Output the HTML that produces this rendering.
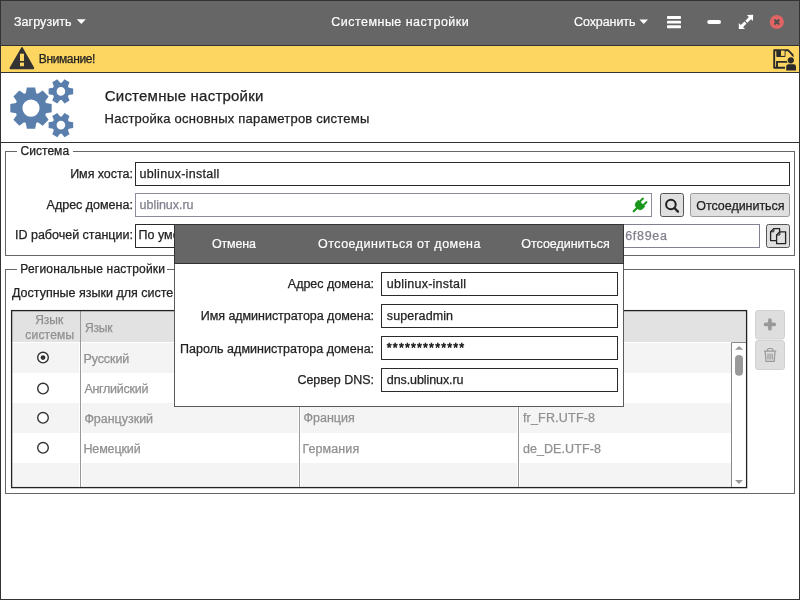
<!DOCTYPE html>
<html><head><meta charset="utf-8">
<style>
*{margin:0;padding:0}
html,body{width:800px;height:600px;overflow:hidden;background:#fff}
svg{display:block;position:absolute;left:0;top:0;will-change:transform}
text{white-space:pre}
</style></head><body>
<svg width="800" height="600" viewBox="0 0 800 600">
<rect x="0" y="0" width="800" height="600" fill="#fff"/>
<rect x="1" y="1" width="798" height="44" fill="#666"/>
<rect x="1" y="45" width="798" height="1" fill="#333"/>
<rect x="1" y="46" width="798" height="26" fill="#fdd662"/>
<rect x="1" y="72" width="798" height="1" fill="#333"/>
<rect x="1" y="142" width="798" height="1" fill="#333"/>
<g font-family="Liberation Sans">
<text x="14.00" y="25.50" font-size="12.5" fill="#ffffff" letter-spacing="0.055" stroke="#ffffff" stroke-width="0.2">Загрузить</text>
<text x="331.25" y="26.25" font-size="12.5" fill="#ffffff" letter-spacing="0.478" stroke="#ffffff" stroke-width="0.2">Системные настройки</text>
<text x="574.00" y="25.60" font-size="12.5" fill="#ffffff" letter-spacing="-0.075" stroke="#ffffff" stroke-width="0.2">Сохранить</text>
</g>
<path d="M76.8 19.2 L85.8 19.2 L81.3 24 Z" fill="#fff"/>
<path d="M639.4 19.4 L648 19.4 L643.7 24 Z" fill="#fff"/>
<rect x="667" y="16.1" width="14" height="2.9" rx="0.7" fill="#fff"/>
<rect x="667" y="20.7" width="14" height="2.9" rx="0.7" fill="#fff"/>
<rect x="667" y="25.3" width="14" height="2.9" rx="0.7" fill="#fff"/>
<rect x="707.2" y="19.9" width="13.8" height="4.1" rx="2" fill="#fff"/>
<path d="M753.2 14.8 L746.9 15.0 L752.9 21.0 Z" fill="#fff"/>
<path d="M738.8 29.1 L745.0 29.1 L738.8 22.9 Z" fill="#fff"/>
<path d="M750.5 17.6 L746.4 21.7 M741.6 26.4 L745.5 22.5" stroke="#fff" stroke-width="3"/>
<circle cx="776.8" cy="22" r="7.1" fill="#e06464"/>
<path d="M775 20.2 L778.6 23.8 M778.6 20.2 L775 23.8" stroke="#505050" stroke-width="2.1" stroke-linecap="round"/>
<path d="M22 47.6 L33.4 67.6 Q34 68.6 32.8 68.6 L11 68.6 Q9.8 68.6 10.4 67.6 Z" fill="#333" stroke="#333" stroke-width="1.2" stroke-linejoin="round"/>
<rect x="20" y="53.7" width="4" height="7.3" fill="#fdd662"/>
<rect x="20" y="62.6" width="4" height="3.6" fill="#fdd662"/>
<path d="M774.2 50.2 H788 L792.6 54.8 V67.8 H774.2 Z" fill="none" stroke="#2a2a2a" stroke-width="1.9" stroke-linejoin="round"/>
<rect x="776.3" y="50" width="9.2" height="7" rx="0.8" fill="#2a2a2a"/>
<rect x="781" y="50.6" width="3.6" height="5.3" fill="#fdd662"/>
<path d="M777 67.8 V61.9 H788" fill="none" stroke="#2a2a2a" stroke-width="1.9"/>
<circle cx="790.8" cy="60.3" r="4.2" fill="#fdd662"/>
<rect x="785" y="63" width="12" height="8.5" rx="2.5" fill="#fdd662"/>
<circle cx="790.8" cy="60.3" r="3.1" fill="#2a2a2a"/>
<path d="M786.2 70.6 V66.6 Q786.2 64.2 788.6 64.2 H793.6 Q796 64.2 796 66.6 V70.6 Z" fill="#2a2a2a"/>
<g fill="#5a7fad" fill-rule="evenodd" transform="translate(0,73)">
<path d="M25.80 20.18 L26.83 14.42 L35.17 14.42 L36.20 20.18 L36.63 20.34 L37.05 20.50 L37.46 20.68 L37.87 20.87 L42.68 17.52 L48.58 23.42 L45.23 28.23 L45.42 28.64 L45.60 29.05 L45.76 29.47 L45.92 29.90 L51.68 30.93 L51.68 39.27 L45.92 40.30 L45.76 40.73 L45.60 41.15 L45.42 41.56 L45.23 41.97 L48.58 46.78 L42.68 52.68 L37.87 49.33 L37.46 49.52 L37.05 49.70 L36.63 49.86 L36.20 50.02 L35.17 55.78 L26.83 55.78 L25.80 50.02 L25.37 49.86 L24.95 49.70 L24.54 49.52 L24.13 49.33 L19.32 52.68 L13.42 46.78 L16.77 41.97 L16.58 41.56 L16.40 41.15 L16.24 40.73 L16.08 40.30 L10.32 39.27 L10.32 30.93 L16.08 29.90 L16.24 29.47 L16.40 29.05 L16.58 28.64 L16.77 28.23 L13.42 23.42 L19.32 17.52 L24.13 20.87 L24.54 20.68 L24.95 20.50 L25.37 20.34 Z M39.60 35.10 A8.6 8.6 0 1 0 22.40 35.10 A8.6 8.6 0 1 0 39.60 35.10 Z"/>
<path d="M68.83 14.81 L73.17 15.53 L73.17 21.27 L68.83 21.99 L68.64 22.37 L68.43 22.75 L68.21 23.11 L67.97 23.47 L69.52 27.59 L64.54 30.46 L61.75 27.06 L61.33 27.09 L60.90 27.10 L60.47 27.09 L60.05 27.06 L57.26 30.46 L52.28 27.59 L53.83 23.47 L53.59 23.11 L53.37 22.75 L53.16 22.37 L52.97 21.99 L48.63 21.27 L48.63 15.53 L52.97 14.81 L53.16 14.43 L53.37 14.05 L53.59 13.69 L53.83 13.33 L52.28 9.21 L57.26 6.34 L60.05 9.74 L60.47 9.71 L60.90 9.70 L61.33 9.71 L61.75 9.74 L64.54 6.34 L69.52 9.21 L67.97 13.33 L68.21 13.69 L68.43 14.05 L68.64 14.43 Z M65.20 18.40 A4.3 4.3 0 1 0 56.60 18.40 A4.3 4.3 0 1 0 65.20 18.40 Z"/>
<path d="M68.83 48.51 L73.17 49.23 L73.17 54.97 L68.83 55.69 L68.64 56.07 L68.43 56.45 L68.21 56.81 L67.97 57.17 L69.52 61.29 L64.54 64.16 L61.75 60.76 L61.33 60.79 L60.90 60.80 L60.47 60.79 L60.05 60.76 L57.26 64.16 L52.28 61.29 L53.83 57.17 L53.59 56.81 L53.37 56.45 L53.16 56.07 L52.97 55.69 L48.63 54.97 L48.63 49.23 L52.97 48.51 L53.16 48.13 L53.37 47.75 L53.59 47.39 L53.83 47.03 L52.28 42.91 L57.26 40.04 L60.05 43.44 L60.47 43.41 L60.90 43.40 L61.33 43.41 L61.75 43.44 L64.54 40.04 L69.52 42.91 L67.97 47.03 L68.21 47.39 L68.43 47.75 L68.64 48.13 Z M65.20 52.10 A4.3 4.3 0 1 0 56.60 52.10 A4.3 4.3 0 1 0 65.20 52.10 Z"/>
</g>
<rect x="5.5" y="151.5" width="789" height="104" fill="none" stroke="#666"/>
<rect x="17" y="148" width="56" height="7" fill="#fff"/>
<rect x="5.5" y="269.5" width="789" height="224" fill="none" stroke="#666"/>
<rect x="17" y="266" width="150" height="7" fill="#fff"/>
<rect x="135.5" y="162.5" width="654" height="23" fill="#fff" stroke="#2a2a2a"/>
<rect x="135.5" y="193.5" width="516" height="23" fill="#fff" stroke="#8c8c9c"/>
<rect x="660.5" y="193.5" width="23" height="23" rx="2" fill="#e0e0e0" stroke="#555"/>
<rect x="690.5" y="193.5" width="99" height="23" rx="2" fill="#e0e0e0" stroke="#999"/>
<rect x="135.5" y="224.5" width="624" height="23" fill="#fff" stroke="#80808e"/>
<path d="M300 224.5 H135.5 V247.5 H300" fill="none" stroke="#2a2a2a"/>
<rect x="766.5" y="224.5" width="23" height="23" rx="2" fill="#e0e0e0" stroke="#555"/>
<circle cx="670.9" cy="204.5" r="4.8" fill="none" stroke="#222" stroke-width="2"/>
<path d="M674.4 208 L678 211.6" stroke="#222" stroke-width="2.2" stroke-linecap="round"/>
<g transform="translate(639.8,205.2) rotate(-45)" fill="#1a961a" stroke="#1a961a">
<path d="M-3 0 H-8.6" stroke-width="2.1" stroke-linecap="round"/>
<path d="M2.6 -4.6 V4.6 H-0.5 Q-4.2 4.6 -4.2 0 Q-4.2 -4.6 -0.5 -4.6 Z" stroke-width="0.6"/>
<path d="M2.5 -2.5 H6.9 M2.5 2.5 H6.9" stroke-width="2" stroke-linecap="round"/>
</g>
<g fill="#e0e0e0" stroke="#222" stroke-width="1.3" stroke-linejoin="round">
<path d="M770.6 231.8 L773.8 228.6 H779.6 V240.6 H770.6 Z"/>
<path d="M770.6 231.8 H773.8 V228.6" fill="none" stroke-width="1"/>
<path d="M776.6 235 L779.8 231.8 H785.6 V243.6 H776.6 Z"/>
<path d="M776.6 235 H779.8 V231.8" fill="none" stroke-width="1"/>
</g>
<rect x="11" y="310" width="736" height="178" fill="#fff"/>
<rect x="12" y="311" width="734" height="31" fill="#e2e2e2"/>
<rect x="12" y="343" width="67" height="30" fill="#f4f4f4"/>
<rect x="82" y="343" width="216" height="30" fill="#f4f4f4"/>
<rect x="301" y="343" width="216" height="30" fill="#f4f4f4"/>
<rect x="520" y="343" width="211" height="30" fill="#f4f4f4"/>
<rect x="12" y="403" width="67" height="30" fill="#f4f4f4"/>
<rect x="82" y="403" width="216" height="30" fill="#f4f4f4"/>
<rect x="301" y="403" width="216" height="30" fill="#f4f4f4"/>
<rect x="520" y="403" width="211" height="30" fill="#f4f4f4"/>
<rect x="12" y="463" width="67" height="24" fill="#f4f4f4"/>
<rect x="82" y="463" width="216" height="24" fill="#f4f4f4"/>
<rect x="301" y="463" width="216" height="24" fill="#f4f4f4"/>
<rect x="520" y="463" width="211" height="24" fill="#f4f4f4"/>
<rect x="80" y="311" width="1" height="176" fill="#999"/>
<rect x="299" y="311" width="1" height="176" fill="#999"/>
<rect x="518" y="311" width="1" height="176" fill="#999"/>
<rect x="731" y="342" width="15" height="145" fill="#fff"/>
<path d="M731.5 487 V342.5 H746" fill="none" stroke="#888"/>
<path d="M735 349.8 L739 346 L743.2 349.8 Z" fill="#999"/>
<rect x="735" y="355" width="8" height="20.8" rx="4" fill="#999"/>
<path d="M735 480 L743 480 L739 484 Z" fill="#999"/>
<rect x="11.6" y="310.6" width="735" height="177" fill="none" stroke="#222" stroke-width="1.3"/>
<circle cx="43" cy="357.6" r="5.3" fill="#fff" stroke="#333" stroke-width="1.4"/>
<circle cx="43" cy="357.6" r="2.4" fill="#333"/>
<circle cx="43" cy="388.6" r="5.3" fill="#fff" stroke="#333" stroke-width="1.4"/>
<circle cx="43" cy="417.8" r="5.3" fill="#fff" stroke="#333" stroke-width="1.4"/>
<circle cx="43" cy="447.8" r="5.3" fill="#fff" stroke="#333" stroke-width="1.4"/>
<rect x="755.5" y="310.5" width="29" height="28.5" rx="2.5" fill="#dedede" stroke="#d2d2d2"/>
<rect x="755.5" y="340.5" width="29" height="29" rx="2.5" fill="#dedede" stroke="#d2d2d2"/>
<path d="M765.6 324.4 H774.2 M769.9 320.1 V328.7" stroke="#999" stroke-width="3.7" stroke-linecap="round"/>
<g fill="none" stroke="#999" stroke-width="1.2">
<path d="M764 351.2 H776.2 M767.6 351 V349.6 Q767.6 348.5 768.8 348.5 H771.6 Q772.8 348.5 772.8 349.6 V351"/>
<path d="M765.2 351.5 L766 361.4 H774.2 L775 351.5"/>
<path d="M768 353.5 V359.5 M770.1 353.5 V359.5 M772.2 353.5 V359.5"/>
</g>
<g font-family="Liberation Sans">
<text x="38.75" y="62.50" font-size="12" fill="#222222" letter-spacing="-0.376" stroke="#222222" stroke-width="0.25">Внимание!</text>
<text x="104.75" y="100.60" font-size="15" fill="#222222" letter-spacing="0.221" stroke="#222222" stroke-width="0.25">Системные настройки</text>
<text x="104.60" y="122.50" font-size="13" fill="#222222" letter-spacing="0.235" stroke="#222222" stroke-width="0.25">Настройка основных параметров системы</text>
<text x="20.50" y="154.50" font-size="12" fill="#222222" letter-spacing="0.041" stroke="#222222" stroke-width="0.25">Система</text>
<text x="70.20" y="177.80" font-size="12.5" fill="#222222" letter-spacing="-0.052" stroke="#222222" stroke-width="0.25">Имя хоста:</text>
<text x="139.60" y="177.70" font-size="12.5" fill="#222222" letter-spacing="0.282" stroke="#222222" stroke-width="0.25">ublinux-install</text>
<text x="46.60" y="209.00" font-size="12.5" fill="#222222" letter-spacing="-0.009" stroke="#222222" stroke-width="0.25">Адрес домена:</text>
<text x="139.60" y="209.00" font-size="12.5" fill="#80808e" letter-spacing="-0.027" stroke="#80808e" stroke-width="0.25">ublinux.ru</text>
<text x="696.25" y="209.50" font-size="12.5" fill="#222222" letter-spacing="-0.040" stroke="#222222" stroke-width="0.25">Отсоединиться</text>
<text x="15.00" y="239.40" font-size="12.5" fill="#222222" letter-spacing="-0.003" stroke="#222222" stroke-width="0.25">ID рабочей станции:</text>
<text x="138.60" y="239.40" font-size="12.5" fill="#222222" letter-spacing="0.000" stroke="#222222" stroke-width="0.25">По умолчанию</text>
<text x="625.20" y="239.80" font-size="12.5" fill="#80808e" letter-spacing="0.704" stroke="#80808e" stroke-width="0.25">6f89ea</text>
<text x="20.30" y="272.70" font-size="12" fill="#222222" letter-spacing="0.199" stroke="#222222" stroke-width="0.25">Региональные настройки</text>
<text x="12.00" y="296.75" font-size="12.5" fill="#222222" letter-spacing="0.000" stroke="#222222" stroke-width="0.25">Доступные языки для системы</text>
<text x="35.20" y="323.90" font-size="12" fill="#909090" letter-spacing="0.002" stroke="#909090" stroke-width="0.25">Язык</text>
<text x="25.30" y="339.20" font-size="12" fill="#909090" letter-spacing="0.202" stroke="#909090" stroke-width="0.25">системы</text>
<text x="84.90" y="331.75" font-size="12" fill="#909090" letter-spacing="-0.131" stroke="#909090" stroke-width="0.25">Язык</text>
<text x="83.40" y="362.80" font-size="12.5" fill="#909090" letter-spacing="-0.083" stroke="#909090" stroke-width="0.25">Русский</text>
<text x="84.40" y="392.70" font-size="12.5" fill="#909090" letter-spacing="-0.276" stroke="#909090" stroke-width="0.25">Английский</text>
<text x="84.40" y="422.80" font-size="12.5" fill="#909090" letter-spacing="-0.022" stroke="#909090" stroke-width="0.25">Французкий</text>
<text x="83.40" y="452.70" font-size="12.5" fill="#909090" letter-spacing="-0.119" stroke="#909090" stroke-width="0.25">Немецкий</text>
<text x="303.50" y="422.30" font-size="12.5" fill="#909090" letter-spacing="0.008" stroke="#909090" stroke-width="0.25">Франция</text>
<text x="302.50" y="452.50" font-size="12.5" fill="#909090" letter-spacing="0.090" stroke="#909090" stroke-width="0.25">Германия</text>
<text x="522.90" y="422.30" font-size="12.5" fill="#909090" letter-spacing="0.202" stroke="#909090" stroke-width="0.25">fr_FR.UTF-8</text>
<text x="522.90" y="452.50" font-size="12.5" fill="#909090" letter-spacing="0.085" stroke="#909090" stroke-width="0.25">de_DE.UTF-8</text>
</g>
<rect x="174.5" y="224.5" width="449" height="182" fill="#fff" stroke="#5a5a5a"/>
<rect x="174" y="224" width="450" height="40" fill="#333"/>
<rect x="175" y="225" width="448" height="38" fill="#666"/>
<rect x="381.5" y="272.5" width="236" height="23" fill="#fff" stroke="#2a2a2a"/>
<rect x="381.5" y="304.5" width="236" height="23" fill="#fff" stroke="#2a2a2a"/>
<rect x="381.5" y="336.5" width="236" height="23" fill="#fff" stroke="#2a2a2a"/>
<rect x="381.5" y="368.5" width="236" height="23" fill="#fff" stroke="#2a2a2a"/>
<g font-family="Liberation Sans">
<text x="211.90" y="247.80" font-size="12.5" fill="#ffffff" letter-spacing="-0.159" stroke="#ffffff" stroke-width="0.2">Отмена</text>
<text x="318.00" y="248.00" font-size="12.5" fill="#ffffff" letter-spacing="0.487" stroke="#ffffff" stroke-width="0.2">Отсоединиться от домена</text>
<text x="521.25" y="247.80" font-size="12.5" fill="#ffffff" letter-spacing="-0.019" stroke="#ffffff" stroke-width="0.2">Отсоединиться</text>
<text x="287.80" y="288.40" font-size="12.5" fill="#222222" letter-spacing="-0.009" stroke="#222222" stroke-width="0.25">Адрес домена:</text>
<text x="200.70" y="320.00" font-size="12.5" fill="#222222" letter-spacing="-0.032" stroke="#222222" stroke-width="0.25">Имя администратора домена:</text>
<text x="180.00" y="352.50" font-size="12.5" fill="#222222" letter-spacing="0.032" stroke="#222222" stroke-width="0.25">Пароль администратора домена:</text>
<text x="297.40" y="383.60" font-size="12.5" fill="#222222" letter-spacing="0.000" stroke="#222222" stroke-width="0.25">Сервер DNS:</text>
<text x="386.80" y="288.00" font-size="12.5" fill="#222222" letter-spacing="0.246" stroke="#222222" stroke-width="0.25">ublinux-install</text>
<text x="386.80" y="319.80" font-size="12.5" fill="#222222" letter-spacing="0.104" stroke="#222222" stroke-width="0.25">superadmin</text>
<text x="386.80" y="352.00" font-size="12.5" fill="#222222" letter-spacing="1.177" stroke="#222222" stroke-width="0.6">*************</text>
<text x="386.80" y="383.60" font-size="12.5" fill="#222222" letter-spacing="-0.083" stroke="#222222" stroke-width="0.25">dns.ublinux.ru</text>
</g>
<rect x="0.5" y="0.5" width="799" height="599" fill="none" stroke="#333"/>
</svg>
</body></html>
